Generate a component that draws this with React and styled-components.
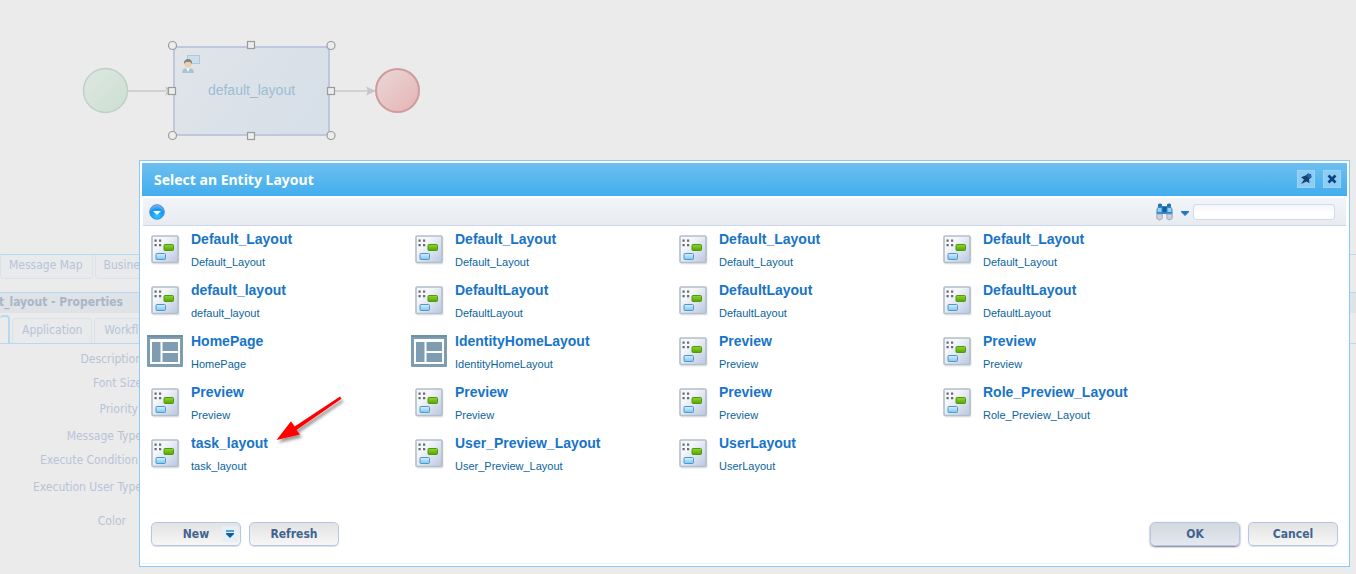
import React from "react";
import styled, { createGlobalStyle } from "styled-components";

const ui = `"DejaVu Sans Condensed", "DejaVu Sans", sans-serif`;
const heading = `"Noto Sans", "Open Sans", sans-serif`;
const arial = `"Liberation Sans", Arial, sans-serif`;

const GlobalStyle = createGlobalStyle`
  *, *::before, *::after { box-sizing: border-box; }
  body { margin: 0; background: #ebebeb; font-family: ${ui}; font-size: 12px; }
`;

const Page = styled.main`
  position: relative;
  min-height: 100vh;
  overflow: hidden;
`;

const Canvas = styled.section`
  height: 254px;
  svg { display: block; }
`;

const MapTabs = styled.nav`
  display: flex;
  gap: 2px;
  height: 38px;
  border-top: 1px solid #b5d9ee;
`;

const MapTab = styled.button`
  height: 24px;
  padding: 0 9px 3px 8px;
  border: 1px solid #dbe1ea;
  border-top: 0;
  border-radius: 0 0 4px 4px;
  background: #e9eaec;
  color: #b7c4d8;
  font: 12px ${ui};
`;

const Properties = styled.section`
  border-top: 1px solid #b5d9ee;
`;

const PropertiesTitle = styled.h2`
  display: flex;
  margin: 0;
  height: 20px;
  background: #dfe2e6;
  color: #a8b6c6;
  font: bold 12px/18px ${ui};
  white-space: nowrap;
  span { display: flex; width: 123px; justify-content: flex-end; }
`;

const PropertyTabs = styled.nav`
  display: flex;
  align-items: flex-end;
  gap: 2px;
  height: 31px;
  border-bottom: 1px solid #b5d9ee;
`;

const PropertyTab = styled.button`
  height: ${(p) => (p.$active ? 28 : 25)}px;
  padding: ${(p) => (p.$active ? "0 4px" : "0 9px 3px")};
  border: 1px solid ${(p) => (p.$active ? "#b5d9ee" : "#dbe1ea")};
  border-width: ${(p) => (p.$active ? "2px 2px 0 0" : "1px 1px 0 1px")};
  border-radius: 4px 4px 0 0;
  background: ${(p) => (p.$active ? "#ebebeb" : "#e9eaec")};
  color: #b7c4d8;
  font: 12px ${ui};
  ${(p) => p.$active && "width: 9px;"}
`;

const Fields = styled.div`
  padding-top: 3px;
`;

const Field = styled.div`
  display: flex;
  align-items: center;
  justify-content: flex-end;
  width: 142px;
  height: ${(p) => p.$height}px;
  padding-right: ${(p) => p.$inset}px;
  color: #b7c4d8;
  white-space: nowrap;
`;

const Dialog = styled.section`
  position: absolute;
  top: 160px;
  left: 139px;
  right: 6px;
  padding: 2px;
  border: 1px solid #87ccf6;
  background: #fff;
`;

const DialogHeader = styled.header`
  display: flex;
  align-items: center;
  height: 33px;
  padding: 0 6px 2px 12px;
  background: linear-gradient(#6dbfef, #42aeee);
`;

const DialogTitle = styled.h1`
  flex: 1;
  margin: 0;
  padding-top: 2px;
  color: #fff;
  font: bold 14px/20px ${heading};
`;

const HeaderButton = styled.button`
  display: grid;
  place-items: center;
  width: 18px;
  height: 18px;
  margin-left: 8px;
  padding: 0;
  border: 1px solid #98d5f8;
  background: #8dcdf4;
`;

const Toolbar = styled.div`
  display: flex;
  align-items: center;
  height: 28px;
  margin: 2px 1px 0;
  padding: 0 11px 0 6px;
  border-bottom: 1px solid #ccd8ea;
  background: linear-gradient(#f1f4f9, #e8ebf0);
`;

const IconButton = styled.button`
  display: grid;
  place-items: center;
  padding: 0;
  border: 0;
  background: none;
`;

const SearchGroup = styled.div`
  display: flex;
  align-items: center;
  gap: 4px;
  margin-left: auto;
  button:first-child { margin-right: 4px; }
`;

const SearchInput = styled.input`
  width: 142px;
  height: 16px;
  padding: 0 4px;
  border: 1px solid #cddcee;
  border-radius: 3px;
  background: linear-gradient(#f5f6f9, #fff 8px);
  font: 11px ${arial};
`;

const List = styled.ul`
  display: grid;
  grid-template-columns: repeat(auto-fill, 264px);
  margin: 0;
  padding: 0 5px;
  list-style: none;
`;

const Item = styled.li`
  display: flex;
  align-items: flex-start;
  gap: 8px;
  height: 51px;
  padding-top: 3px;
`;

const ItemIcon = styled.span`
  display: grid;
  place-items: center;
  width: 36px;
  height: 40px;
`;

const ItemText = styled.div`
  display: flex;
  flex-direction: column;
  gap: 3px;
`;

const ItemLink = styled.a`
  color: #1874c6;
  font: bold 14px/20px ${arial};
  text-decoration: none;
`;

const ItemName = styled.span`
  color: #0a649c;
  font: 11px/20px ${arial};
`;

const Footer = styled.footer`
  display: flex;
  gap: 8px;
  padding: 41px 9px 17px;
  border-bottom: 1px solid #eaf3fa;
`;

const Button = styled.button`
  display: flex;
  align-items: center;
  justify-content: center;
  position: relative;
  width: 90px;
  height: 24px;
  padding: 0 0 1px;
  border: 1px solid #b4c8e6;
  border-radius: 5px;
  background: ${(p) => (p.$primary ? "linear-gradient(#d3d8df, #e4e8f0)" : "linear-gradient(#e3e3e3, #f6f6f6)")};
  box-shadow: ${(p) => (p.$primary ? "0 1px 2px #777" : "0 1px 1px #ddd")};
  color: #41648f;
  font: bold 12px ${ui};
  ${(p) => p.$push && "margin-left: auto;"}
`;

const MenuMark = styled.span`
  position: absolute;
  right: 2px;
  top: 3px;
  display: grid;
  place-items: center;
  width: 16px;
  height: 16px;
  background: #e6eff6;
`;

const Pointer = styled.svg`
  position: absolute;
  left: 270px;
  top: 390px;
  pointer-events: none;
`;

function Diagram() {
  return (
    <svg width="440" height="160" role="img" aria-label="Workflow diagram">
      <defs>
        <linearGradient id="start" x1="0" y1="0" x2="1" y2="1">
          <stop offset="0" stopColor="#dfe7e2" /><stop offset="1" stopColor="#cbdfd2" />
        </linearGradient>
        <linearGradient id="end" x1="0" y1="0" x2="1" y2="1">
          <stop offset="0" stopColor="#ead8d8" /><stop offset="1" stopColor="#e6b3b3" />
        </linearGradient>
        <linearGradient id="task" x1="0" y1="0" x2="1" y2="0.4">
          <stop offset="0" stopColor="#e1e5ea" /><stop offset="1" stopColor="#d7dfe8" />
        </linearGradient>
      </defs>
      <path d="M128 91H166M332 91H368" stroke="#d2d2d2" strokeWidth="2" />
      <path d="M165 86.5l10 4.5-10 4.5 2-4.5zM366 86.5l10 4.5-10 4.5 2-4.5z" fill="#c6c6c6" />
      <circle cx="105.500" cy="90.500" r="22" fill="url(#start)" stroke="#bdd0c4" strokeWidth="1.400" />
      <circle cx="397.500" cy="90.500" r="21.500" fill="url(#end)" stroke="#cd9d9d" strokeWidth="2" />
      <rect x="174" y="47" width="155" height="88" rx="4" fill="url(#task)" stroke="#bdc8dd" strokeWidth="2" />
      <rect x="187.500" y="55.500" width="12" height="8" fill="#cbdeea" stroke="#aacbde" />
      <path d="M182 73c0-4 2-5 6-5s6 1 6 5z" fill="#a9c5d4" />
      <path d="M186 68l2 4 2-4z" fill="#f2f2f2" />
      <circle cx="188" cy="64" r="3.500" fill="#ecd0ab" />
      <path d="M184 64c-1-6 9-7 8 0l-2-2h-4z" fill="#8b8580" />
      <text x="251.500" y="95" textAnchor="middle" fill="#9dbdd2" fontFamily='"Liberation Sans", Arial, sans-serif' fontSize="14">default_layout</text>
      <g fill="#ededed" stroke="#9b9b9b" strokeWidth="1.200">
        <circle cx="172.500" cy="45.500" r="4" /><circle cx="331" cy="45.500" r="4" />
        <circle cx="172.500" cy="135.500" r="4" /><circle cx="331" cy="135.500" r="4" />
        <rect x="247.500" y="41.500" width="7" height="7" /><rect x="168.500" y="87.500" width="7" height="7" />
        <rect x="327.500" y="87.500" width="7" height="7" /><rect x="247.500" y="132.500" width="7" height="7" />
      </g>
    </svg>
  );
}

function LayoutIcon() {
  return (
    <svg width="30" height="31" viewBox="0 0 30 31" aria-hidden="true">
      <defs>
        <linearGradient id="sheet" x1="0" y1="0" x2="1" y2="1">
          <stop offset="0.300" stopColor="#f5f7fa" /><stop offset="1" stopColor="#b9c7e2" />
        </linearGradient>
        <linearGradient id="green" x1="0" y1="0" x2="0" y2="1">
          <stop offset="0" stopColor="#93d532" /><stop offset="1" stopColor="#55a404" />
        </linearGradient>
        <linearGradient id="blue" x1="0" y1="0" x2="0" y2="1">
          <stop offset="0" stopColor="#d5effd" /><stop offset="1" stopColor="#82c6f4" />
        </linearGradient>
      </defs>
      <rect x="2.500" y="2.500" width="27" height="28" rx="1.500" fill="#e5e7ea" />
      <rect x="2" y="2" width="26" height="26.500" rx="1" fill="url(#sheet)" stroke="#b3bfca" strokeWidth="1.600" />
      <path d="M4.500 5.500h2.200v2.200h-2.200zM9 5.500h2.200v2.200h-2.200zM4.500 10h2.200v2.200h-2.200zM9 10h2.200v2.200h-2.200z" fill="#666c73" />
      <rect x="14" y="10.500" width="9.500" height="6" rx="1" fill="url(#green)" stroke="#4f9a08" />
      <rect x="6" y="19.500" width="9.500" height="6" rx="1" fill="url(#blue)" stroke="#4f96c9" />
    </svg>
  );
}

function HomeIcon() {
  return (
    <svg width="36" height="32" viewBox="0 0 36 32" aria-hidden="true">
      <rect width="36" height="32" rx="1" fill="#7f9db2" />
      <path d="M0 0h36v2H0z" fill="#6f91a8" />
      <path d="M3 4h30v25H3z" fill="#fff" />
      <path d="M5 7h8.500v20H5zM15.500 7H31v9H15.500zM15.500 18H31v9H15.500z" fill="#7f9db2" />
    </svg>
  );
}

function PinIcon() {
  return (
    <svg width="12" height="12" viewBox="0 0 12 12" aria-hidden="true">
      <path d="M5.500 2.500L8 .5l3 .8.500 3-2.500 2 .5 4L6.500 8.500 1 11l3-4.500L1 4.200z" fill="#17416e" />
      <path d="M6.500 2.200L8.500.8l2.300.8.500 2.200L9 5.500z" fill="#1c69b5" />
    </svg>
  );
}

function CloseIcon() {
  return (
    <svg width="10" height="10" viewBox="0 0 10 10" aria-hidden="true">
      <path d="M1.500 1.500l7 7M8.500 1.500l-7 7" stroke="#0c4183" strokeWidth="2.600" />
    </svg>
  );
}

function RoundArrowIcon() {
  return (
    <svg width="16" height="16" viewBox="0 0 16 16" aria-hidden="true">
      <defs>
        <radialGradient id="ball" cx="0.500" cy="0.800" r="0.800">
          <stop offset="0" stopColor="#25c9ff" /><stop offset="0.600" stopColor="#1595f3" /><stop offset="1" stopColor="#83bdf5" />
        </radialGradient>
      </defs>
      <circle cx="8" cy="8" r="7.300" fill="url(#ball)" stroke="#4a8fe0" />
      <path d="M4 7h8l-4 4z" fill="#fff" />
    </svg>
  );
}

function BinocularsIcon() {
  return (
    <svg width="17" height="18" viewBox="0 0 17 18" aria-hidden="true">
      <path d="M2 2q0-1.500 2-1.500T6 2v1h5V2q0-1.500 2-1.500T15 2v2l1.500 2v5H.5V6L2 4z" fill="#3187c4" />
      <path d="M2 1.500q2-1.500 4 0v2H2zM11 1.500q2-1.500 4 0v2h-4z" fill="#29719f" />
      <path d="M1.500 5h4v4h-4zM11.500 5h4v4h-4z" fill="#8fd0f4" />
      <path d="M.8 11h5.400v4.500q-2.700 3-5.400 0zM10.800 11h5.400v4.500q-2.700 3-5.400 0z" fill="#cbd0dd" stroke="#8fa0af" strokeWidth=".8" />
      <path d="M6.500 4h4v5h-4z" fill="#125f9c" />
    </svg>
  );
}

function RedArrow() {
  return (
    <Pointer width="80" height="60" viewBox="0 0 80 60" aria-hidden="true">
      <defs>
        <filter id="drop" x="-20%" y="-20%" width="150%" height="150%">
          <feDropShadow dx="2" dy="3" stdDeviation="1.500" floodColor="#000" floodOpacity="0.400" />
        </filter>
      </defs>
      <path d="M6.500 50L21 31.300l3.600 5.200L70 6.500l1.500 2.300L26.500 40l3.500 4.500z" fill="#fe0000" filter="url(#drop)" />
    </Pointer>
  );
}

const fields = [
  { label: "Description", height: 24, inset: 0 },
  { label: "Font Size", height: 24, inset: 0 },
  { label: "Priority", height: 28, inset: 4 },
  { label: "Message Type", height: 26, inset: 0 },
  { label: "Execute Condition", height: 22, inset: 4 },
  { label: "Execution User Type", height: 32, inset: 0 },
  { label: "Color", height: 36, inset: 16 },
];

const layouts = [
  "Default_Layout", "Default_Layout", "Default_Layout", "Default_Layout",
  "default_layout", "DefaultLayout", "DefaultLayout", "DefaultLayout",
  "HomePage", "IdentityHomeLayout", "Preview", "Preview",
  "Preview", "Preview", "Preview", "Role_Preview_Layout",
  "task_layout", "User_Preview_Layout", "UserLayout",
];

export default function App() {
  return (
    <>
      <GlobalStyle />
      <Page>
        <Canvas><Diagram /></Canvas>
        <MapTabs>
          <MapTab>Message Map</MapTab>
          <MapTab>Business</MapTab>
        </MapTabs>
        <Properties>
          <PropertiesTitle><span>default_layout - Properties</span></PropertiesTitle>
          <PropertyTabs>
            <PropertyTab $active aria-label="General" />
            <PropertyTab>Application</PropertyTab>
            <PropertyTab>Workflow</PropertyTab>
          </PropertyTabs>
          <Fields>
            {fields.map((f) => (
              <Field key={f.label} $height={f.height} $inset={f.inset}>{f.label}</Field>
            ))}
          </Fields>
        </Properties>

        <Dialog role="dialog" aria-labelledby="dialog-title">
          <DialogHeader>
            <DialogTitle id="dialog-title">Select an Entity Layout</DialogTitle>
            <HeaderButton aria-label="Pin"><PinIcon /></HeaderButton>
            <HeaderButton aria-label="Close"><CloseIcon /></HeaderButton>
          </DialogHeader>
          <Toolbar>
            <IconButton aria-label="Actions"><RoundArrowIcon /></IconButton>
            <SearchGroup>
              <IconButton aria-label="Search"><BinocularsIcon /></IconButton>
              <IconButton aria-label="Search options">
                <svg width="8" height="8" viewBox="0 0 8 8"><path d="M0 3h8v1L4 8 0 4z" fill="#1c7bcb" /></svg>
              </IconButton>
              <SearchInput aria-label="Search layouts" />
            </SearchGroup>
          </Toolbar>
          <List>
            {layouts.map((name, i) => (
              <Item key={i}>
                <ItemIcon>{name.includes("Home") ? <HomeIcon /> : <LayoutIcon />}</ItemIcon>
                <ItemText>
                  <ItemLink href="#">{name}</ItemLink>
                  <ItemName>{name}</ItemName>
                </ItemText>
              </Item>
            ))}
          </List>
          <Footer>
            <Button>
              New
              <MenuMark>
                <svg width="8" height="8" viewBox="0 0 8 8" aria-hidden="true">
                  <path d="M0 0h8v2H0z" fill="#4fa3dc" /><path d="M0 3h8v1L4 8 0 4z" fill="#0d5da6" />
                </svg>
              </MenuMark>
            </Button>
            <Button>Refresh</Button>
            <Button $primary $push>OK</Button>
            <Button>Cancel</Button>
          </Footer>
        </Dialog>
        <RedArrow />
      </Page>
    </>
  );
}
